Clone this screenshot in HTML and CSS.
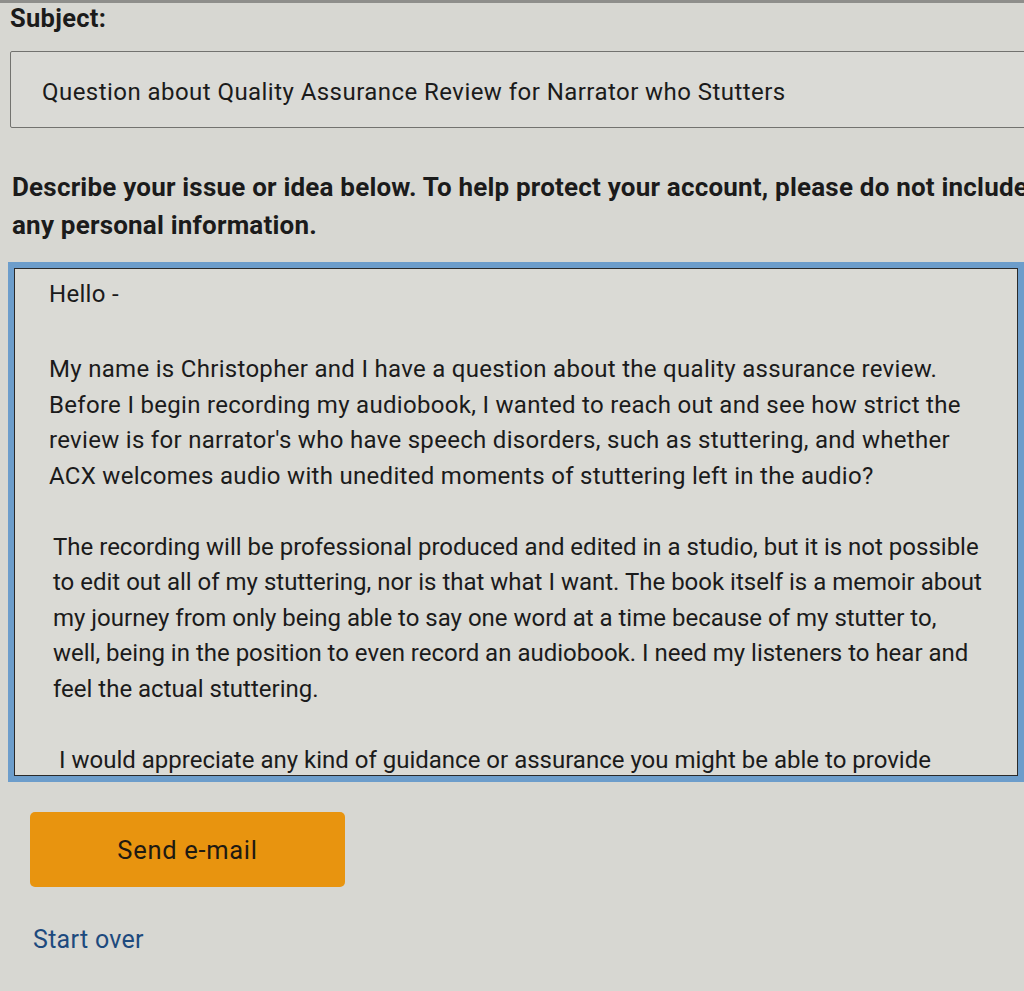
FILE: index.html
```html
<!DOCTYPE html>
<html lang="en">
<head>
<meta charset="utf-8">
<title>Contact</title>
<link rel="stylesheet" href="styles.css">
</head>
<body>
<div class="topstrip"></div>
<main class="page">
  <label class="label" for="subject">Subject:</label>
  <div class="subject" id="subject">Question about Quality Assurance Review for Narrator who Stutters</div>

  <h2 class="describe">Describe your issue or idea below. To help protect your account, please do not include<br>any personal information.</h2>

  <div class="message">
    <p class="p-hello">Hello -</p>
    <p class="p1">My name is Christopher and I have a question about the quality assurance review.<br>Before I begin recording my audiobook, I wanted to reach out and see how strict the<br>review is for narrator's who have speech disorders, such as stuttering, and whether<br>ACX welcomes audio with unedited moments of stuttering left in the audio?</p>
    <p class="p2">The recording will be professional produced and edited in a studio, but it is not possible<br>to edit out all of my stuttering, nor is that what I want. The book itself is a memoir about<br>my journey from only being able to say one word at a time because of my stutter to,<br>well, being in the position to even record an audiobook. I need my listeners to hear and<br>feel the actual stuttering.</p>
    <p class="p3">I would appreciate any kind of guidance or assurance you might be able to provide</p>
  </div>

  <button class="send" type="button">Send e-mail</button>

  <a class="startover" href="#">Start over</a>
</main>
</body>
</html>
```

FILE: styles.css
```css
html, body {
  margin: 0;
  padding: 0;
}
body {
  background: #d7d7d2;
  color: #1b1b1b;
  font-family: Roboto, "Liberation Sans", sans-serif;
  width: 1024px;
  height: 991px;
  overflow: hidden;
}
.topstrip {
  height: 3px;
  background: #8e8e8b;
}
.page {
  display: flex;
  flex-direction: column;
  align-items: flex-start;
  padding-left: 10px;
}
.label {
  font-size: 25.5px;
  font-weight: 700;
  line-height: 30px;
  letter-spacing: 0.3px;
}
.subject {
  margin-top: 18px;
  box-sizing: border-box;
  width: 1040px;
  height: 77px;
  border: 1.5px solid #72726f;
  border-radius: 2px;
  background: #dadad6;
  padding: 4px 0 0 31px;
  font-size: 24px;
  letter-spacing: 0.45px;
  display: flex;
  align-items: center;
  white-space: nowrap;
}
.describe {
  margin: 40px 0 0 2px;
  font-size: 26px;
  font-weight: 700;
  line-height: 38px;
  letter-spacing: 0.2px;
  white-space: nowrap;
}
.message {
  margin-top: 24px;
  margin-left: 4px;
  box-sizing: border-box;
  width: 1004px;
  height: 508px;
  border: 1.5px solid #2a2a2a;
  outline: 6px solid #6c9dcb;
  background: #dadad5;
  padding: 8px 0 0 34px;
  overflow: hidden;
  font-size: 24px;
  line-height: 35.5px;
  letter-spacing: 0.3px;
  white-space: nowrap;
}
.message p {
  margin: 0 0 35.5px 0;
}
.message .p-hello {
  margin-bottom: 39.5px;
}
.message .p2 {
  margin-left: 4px;
  letter-spacing: 0;
}
.message .p3 {
  margin-left: 10px;
  letter-spacing: 0;
}
.send {
  margin-top: 36px;
  margin-left: 20px;
  width: 315px;
  height: 75px;
  background: #e8940f;
  border: none;
  border-radius: 5px;
  color: #1e1a12;
  font-family: Roboto, "Liberation Sans", sans-serif;
  font-size: 25.5px;
  letter-spacing: 0.7px;
  padding: 0;
  cursor: pointer;
}
.startover {
  margin-top: 38px;
  margin-left: 23px;
  color: #1d4a7e;
  font-size: 25px;
  letter-spacing: 0.3px;
  text-decoration: none;
  line-height: 30px;
}
```
